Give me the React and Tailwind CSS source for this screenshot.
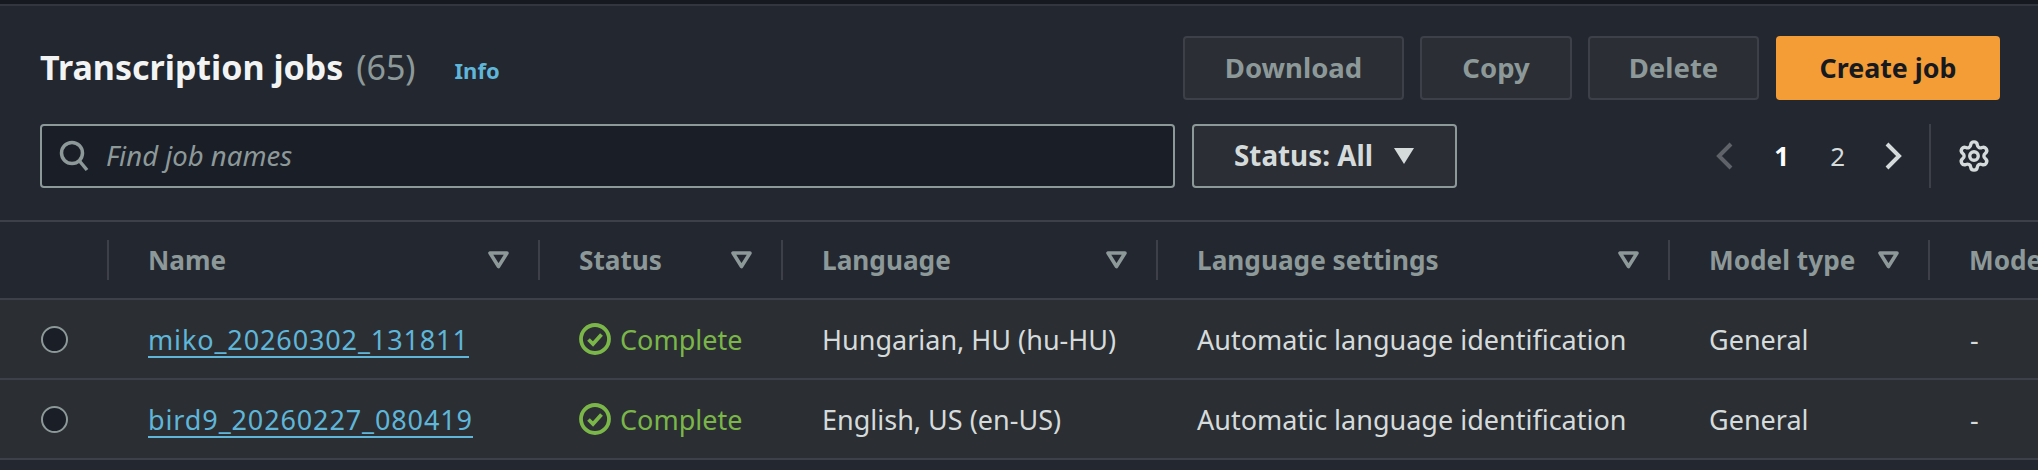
import React from "react";
import { Settings } from "lucide-react";

const cols = "grid grid-cols-[107px_431px_243px_375px_512px_260px_1fr]";

function FilterIcon() {
  return (
    <svg width="21" height="18" viewBox="0 0 21 18" className="shrink-0 text-[#8d9999]">
      <path d="M2 2 H19 L10.5 15.5 Z" fill="none" stroke="currentColor" strokeWidth="3.6" strokeLinejoin="round" />
    </svg>
  );
}

function HeaderCell({ label, filter = true }) {
  return (
    <div className="flex h-10 items-center justify-between overflow-hidden whitespace-nowrap border-l-2 border-[#3d4048] pl-[39px] pr-[29px]">
      <span className="text-[26.2px] font-bold leading-none text-[#8d9999]">{label}</span>
      {filter && <FilterIcon />}
    </div>
  );
}

function Check() {
  return (
    <svg width="32" height="32" viewBox="0 0 32 32" className="shrink-0">
      <circle cx="16" cy="16" r="14" fill="none" stroke="#7ab648" strokeWidth="3.8" />
      <path d="M9.5 16.5 L14 21 L22.5 11.5" fill="none" stroke="#7ab648" strokeWidth="3.8" />
    </svg>
  );
}

function Row({ name, language }) {
  return (
    <div className={`${cols} h-[80px] items-center border-b-2 border-[#3d4048] bg-[#2b2e33] text-[27px] leading-none text-[#d5dbdb]`}>
      <div className="pl-[41px]">
        <div className="h-[27px] w-[27px] rounded-full border-2 border-[#8d9999] bg-[#1a1e27]" />
      </div>
      <div className="pl-[41px]">
        <a className="mt-[5px] inline-block border-b-2 border-[#5fb6d8] pb-[3px] tracking-[0.88px] text-[#5fb6d8]">{name}</a>
      </div>
      <div className="flex items-center gap-[9px] pl-[41px] text-[#7ab648]">
        <Check />
        <span>Complete</span>
      </div>
      <div className="pl-[41px]">{language}</div>
      <div className="pl-[41px]">Automatic language identification</div>
      <div className="pl-[41px]">General</div>
      <div className="pl-[42px]">-</div>
    </div>
  );
}

function ActionButton({ children, className }) {
  return (
    <button className={`flex h-16 items-center justify-center rounded-[4px] border-2 border-[#3d4048] bg-[#2b2e34] text-[27.5px] font-bold text-[#8d9999] ${className}`}>
      {children}
    </button>
  );
}

export default function App() {
  return (
    <div className="h-[470px] w-[2038px] overflow-hidden bg-[#232730] font-['Noto_Sans','Open_Sans',sans-serif]">
      <div className="h-1.5 border-b-2 border-[#33363e] bg-[#161a20]" />
      <div className="border-b-2 border-[#3d4048] pb-[32px] pl-10 pr-[38px] pt-[30px]">
        <div className="flex h-16 items-center justify-between">
          <div className="flex -translate-y-px items-baseline whitespace-nowrap">
            <h1 className="text-[34px] font-bold leading-none text-[#f2f3f3]">
              Transcription jobs <span className="ml-1 font-normal text-[#8d9999]">(65)</span>
            </h1>
            <a className="relative -top-px ml-[39px] text-[22px] font-bold leading-none text-[#5fb6d8]">Info</a>
          </div>
          <div className="flex gap-4">
            <ActionButton className="w-[221px]">Download</ActionButton>
            <ActionButton className="w-[152px]">Copy</ActionButton>
            <ActionButton className="w-[171px]">Delete</ActionButton>
            <button className="ml-px flex h-16 w-[224px] items-center justify-center rounded-[4px] bg-[#f49d36] text-[26.8px] font-bold text-[#161a20]">
              Create job
            </button>
          </div>
        </div>
        <div className="mt-6 flex h-16 items-stretch">
          <div className="flex w-[1135px] items-center gap-[16px] rounded-[4px] border-2 border-[#8d9999] bg-[#1a1e27] pl-[16px]">
            <svg width="32" height="34" viewBox="0 0 32 34" className="shrink-0">
              <circle cx="14" cy="14" r="10.5" fill="none" stroke="#8d9999" strokeWidth="3.5" />
              <path d="M21.5 22 L29 31" stroke="#8d9999" strokeWidth="3.5" fill="none" />
            </svg>
            <span className="text-[27.5px] italic text-[#8d9999]">Find job names</span>
          </div>
          <button className="ml-[17px] flex w-[265px] items-center justify-center gap-[20px] rounded-[4px] border-2 border-[#8d9999] bg-[#2b2e34] text-[27.8px] font-bold text-[#d5dbdb]">
            Status: All
            <svg width="22" height="18" viewBox="0 0 22 18"><path d="M1 1 H21 L11 17 Z" fill="#d5dbdb" /></svg>
          </button>
          <div className="ml-auto flex items-center">
            <svg width="18" height="28" viewBox="0 0 18 28"><path d="M15 2 L3 14 L15 26" fill="none" stroke="#5f6269" strokeWidth="4" /></svg>
            <span className="ml-[40px] text-[26px] font-bold text-white">1</span>
            <span className="ml-[41px] text-[26px] text-[#d5dbdb]">2</span>
            <svg width="18" height="28" viewBox="0 0 18 28" className="ml-[39px]"><path d="M3 2 L15 14 L3 26" fill="none" stroke="#d5dbdb" strokeWidth="4" /></svg>
            <div className="ml-[27px] h-16 w-0.5 bg-[#3d4048]" />
            <Settings size={34} strokeWidth={2.4} className="ml-[26px] text-[#d5dbdb]" />
            <div className="w-[9px]" />
          </div>
        </div>
      </div>
      <div className={`${cols} h-[78px] items-center border-b-2 border-[#3d4048]`}>
        <div />
        <HeaderCell label="Name" />
        <HeaderCell label="Status" />
        <HeaderCell label="Language" />
        <HeaderCell label="Language settings" />
        <HeaderCell label="Model type" />
        <HeaderCell label="Model name" filter={false} />
      </div>
      <Row name="miko_20260302_131811" language="Hungarian, HU (hu-HU)" />
      <Row name="bird9_20260227_080419" language="English, US (en-US)" />
    </div>
  );
}
